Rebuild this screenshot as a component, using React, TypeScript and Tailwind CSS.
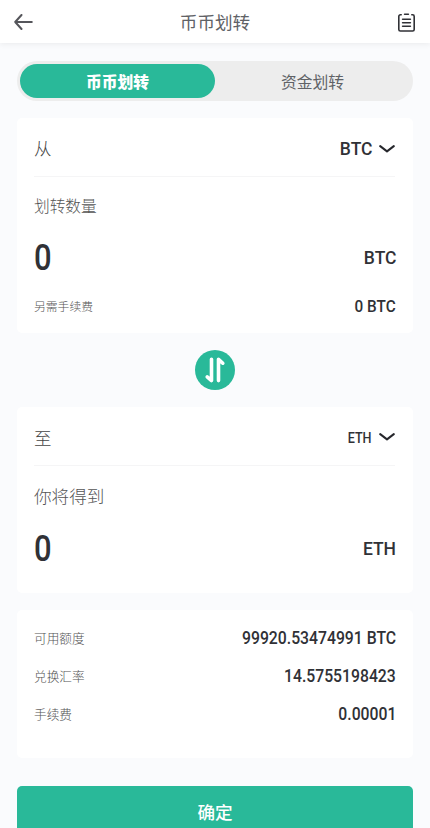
import type { ReactNode } from "react";

const cjk = "font-['Noto_Sans_CJK_SC',sans-serif]";
const din = "font-['Roboto','Liberation_Sans',sans-serif]";

function Num({ children, className = "" }: { children: ReactNode; className?: string }) {
  return (
    <span className={`${din} inline-block whitespace-nowrap font-medium leading-none text-[#303136] ${className}`}>
      {children}
    </span>
  );
}

function Chevron() {
  return (
    <svg width="16" height="8" viewBox="0 0 16 8" fill="none" stroke="#26272c" strokeWidth="2" strokeLinecap="round" strokeLinejoin="round">
      <path d="M1.2 1.1 8 6.4l6.8-5.3" />
    </svg>
  );
}

function DetailRow({ label, value }: { label: string; value: string }) {
  return (
    <div className="flex h-[38px] items-center justify-between">
      <span className="text-[12.7px] font-light text-[#555]">{label}</span>
      <Num className="origin-right scale-x-[0.875] text-[18px]">{value}</Num>
    </div>
  );
}

export default function App() {
  return (
    <div className={`${cjk} flex h-[828px] w-full flex-col overflow-hidden bg-[#fafbfd] leading-none text-[#606266]`}>
      <header className="flex h-[43px] shrink-0 items-center justify-between bg-white pl-[14px] pr-[15px] shadow-[0_1px_6px_rgba(0,0,0,0.07)]">
        <svg width="19" height="16" viewBox="0 0 19 16" fill="none" stroke="#55565b" strokeWidth="2" strokeLinecap="round" strokeLinejoin="round">
          <path d="M17.8 8H1.2M7.5 1 1.2 8l6.3 7" />
        </svg>
        <h1 className="mr-px text-[17.6px] font-normal">币币划转</h1>
        <svg className="mt-[2px]" width="17" height="19" viewBox="0 0 17 19" fill="none" stroke="#303136" strokeWidth="1.6" strokeLinecap="round">
          <path d="M3.2 1.8H2.4A1.6 1.6 0 0 0 .8 3.4v13A1.6 1.6 0 0 0 2.4 18h12.2a1.6 1.6 0 0 0 1.6-1.6v-13a1.6 1.6 0 0 0-1.6-1.6h-.8M6.6 1.2h3.8M4.6 6.3h7.8M4.6 9.8h7.8M4.6 13.3h7.8" />
        </svg>
      </header>

      <main className="flex flex-col px-[17px] pt-[18px]">
        <div className="flex h-10 items-center rounded-full bg-[#ededed] px-[3px] text-[15.8px]">
          <div className="flex h-[34px] w-[195px] items-center justify-center rounded-full bg-[#29b999] pt-px font-black text-white">币币划转</div>
          <div className="flex flex-1 items-center justify-center pt-px">资金划转</div>
        </div>

        <section className="mt-[17px] flex h-[215px] flex-col rounded-[5px] bg-white pl-[17px] pr-[18px]">
          <div className="flex h-[59px] items-center justify-between border-b border-[#f5f5f6] pt-[2px]">
            <span className="text-[17.5px] font-light text-[#444]">从</span>
            <div className="flex items-center">
              <Num className="origin-right scale-x-[0.92] text-[19px]">BTC</Num>
              <span className="ml-[7px] mt-px"><Chevron /></span>
            </div>
          </div>
          <div className="mt-[21px] text-[15.7px] font-light text-[#555]">划转数量</div>
          <div className="mt-[21px] flex h-[46px] items-center justify-between">
            <Num className="origin-left scale-x-[0.86] text-[36px]">0</Num>
            <Num className="-mr-px origin-right scale-x-[0.92] text-[19px]">BTC</Num>
          </div>
          <div className="mt-[15.5px] flex h-5 items-center justify-between">
            <span className="text-[11.8px] font-light text-[#555]">另需手续费</span>
            <Num className="-mr-px origin-right scale-x-[0.9] text-[17px]">0 BTC</Num>
          </div>
        </section>

        <div className="mt-[17px] flex size-10 items-center justify-center self-center rounded-full bg-[#29b999]">
          <svg width="22" height="26" viewBox="0 0 22 26" fill="none" stroke="white" strokeWidth="3.6" strokeLinecap="round" strokeLinejoin="round">
            <path d="M7.5 2.2v21.4l-4.3-3.7M14.5 23.6V2.2l4.3 4" />
          </svg>
        </div>

        <section className="mt-[17px] flex h-[186px] flex-col rounded-[5px] bg-white pl-[17px] pr-[18px]">
          <div className="flex h-[59px] items-center justify-between border-b border-[#f5f5f6] pt-[3px]">
            <span className="text-[17.5px] font-light text-[#444]">至</span>
            <div className="flex items-center">
              <Num className="origin-right scale-x-[0.9] text-[14px]">ETH</Num>
              <span className="mb-[2px] ml-[7px]"><Chevron /></span>
            </div>
          </div>
          <div className="mt-[21px] text-[17.6px] font-light text-[#555]">你将得到</div>
          <div className="mt-[21px] flex h-[46px] items-center justify-between">
            <Num className="origin-left scale-x-[0.86] text-[36px]">0</Num>
            <Num className="-mr-px origin-right scale-x-[0.92] text-[19px]">ETH</Num>
          </div>
        </section>

        <section className="mt-[17px] flex h-[148px] flex-col rounded-[5px] bg-white px-[17px] pt-[9px]">
          <DetailRow label="可用额度" value="99920.53474991 BTC" />
          <DetailRow label="兑换汇率" value="14.5755198423" />
          <DetailRow label="手续费" value="0.00001" />
        </section>

        <button className="mt-[28px] h-[51px] rounded-[5px] bg-[#29b999] text-[17.6px] font-medium text-white">确定</button>
      </main>
    </div>
  );
}
